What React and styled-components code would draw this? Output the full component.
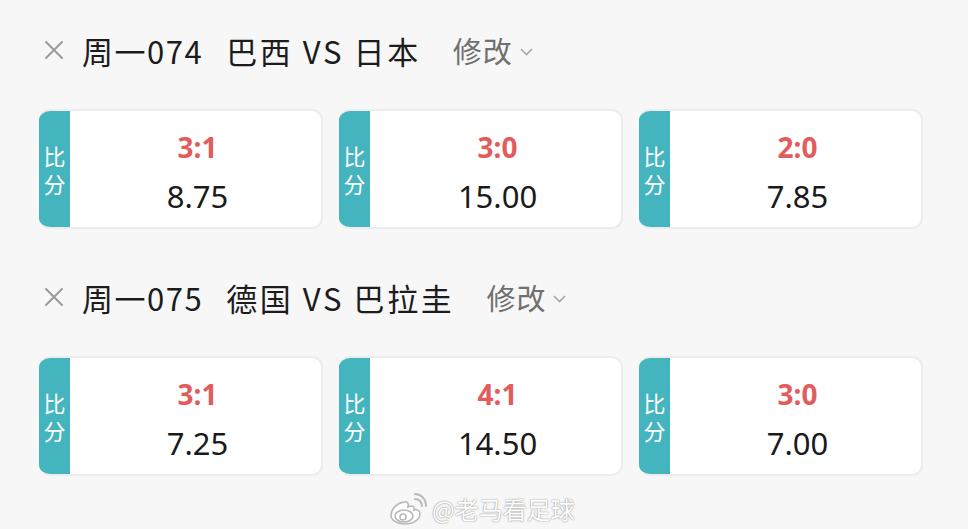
import React from "react";
import styled, { createGlobalStyle } from "styled-components";

const GlobalStyle = createGlobalStyle`
  html, body {
    margin: 0;
    padding: 0;
    background: #f7f7f7;
  }
  body {
    font-family: "Noto Sans", "Noto Sans CJK SC", sans-serif;
  }
`;

const matches = [
  {
    code: "周一074",
    teams: "巴西 VS 日本",
    picks: [
      { score: "3:1", odds: "8.75" },
      { score: "3:0", odds: "15.00" },
      { score: "2:0", odds: "7.85" },
    ],
  },
  {
    code: "周一075",
    teams: "德国 VS 巴拉圭",
    picks: [
      { score: "3:1", odds: "7.25" },
      { score: "4:1", odds: "14.50" },
      { score: "3:0", odds: "7.00" },
    ],
  },
];

const Page = styled.div`
  position: relative;
  width: 968px;
  height: 529px;
  padding: 22px 0 0 39px;
  box-sizing: border-box;
  overflow: hidden;
`;

const Section = styled.section`
  width: 884px;
  & + & {
    margin-top: 40px;
  }
`;

const Header = styled.div`
  display: flex;
  align-items: center;
  height: 56px;
  padding-left: 5px;
`;

const Close = styled.svg`
  width: 20px;
  height: 20px;
  margin-right: 18px;
  flex-shrink: 0;
`;

const Title = styled.div`
  font-family: "Noto Sans CJK SC", sans-serif;
  font-size: 31px;
  color: #1c1c1c;
  letter-spacing: ${(p) => p.spacing}px;
  white-space: pre;
  margin-right: ${(p) => p.gap || 0}px;
`;

const Edit = styled.div`
  display: flex;
  align-items: center;
  font-family: "Noto Sans CJK SC", sans-serif;
  font-size: 29px;
  letter-spacing: 1px;
  color: #707070;
  svg {
    margin-left: 7px;
    margin-top: 4px;
  }
`;

const Cards = styled.div`
  display: grid;
  grid-template-columns: repeat(3, 1fr);
  column-gap: 16px;
  margin-top: 31px;
`;

const Card = styled.div`
  display: flex;
  height: 120px;
  background: #fff;
  border: 2px solid #ececec;
  border-left: none;
  border-radius: 11px;
  box-sizing: border-box;
  overflow: hidden;
`;

const Tag = styled.div`
  width: 31px;
  flex-shrink: 0;
  background: #44b4be;
  color: #fff;
  font-family: "Noto Sans CJK SC", sans-serif;
  font-size: 22px;
  line-height: 28px;
  display: flex;
  align-items: center;
  justify-content: center;
  margin: -2px 0;
  span {
    width: 22px;
    text-align: center;
    word-break: break-all;
  }
`;

const Body = styled.div`
  flex: 1;
  display: flex;
  flex-direction: column;
  align-items: center;
  justify-content: center;
  padding: 6px 0 0 4px;
`;

const Score = styled.div`
  font-size: 28px;
  font-weight: 700;
  color: #e25c5c;
  line-height: 36px;
`;

const Odds = styled.div`
  font-size: 31px;
  color: #1a1a1a;
  line-height: 40px;
  margin-top: 11px;
`;

const Watermark = styled.div`
  position: absolute;
  left: 389px;
  top: 491px;
  display: flex;
  align-items: center;
  font-family: "Noto Sans CJK SC", sans-serif;
  font-size: 24px;
  color: #fff;
  text-shadow: 0 0 2px rgba(0, 0, 0, 0.35), 0 0 1px rgba(0, 0, 0, 0.3);
  svg {
    margin-right: 5px;
  }
`;

const WeiboLogo = () => (
  <svg width="38" height="32" viewBox="0 0 38 32" fill="none">
    <g stroke="#b9b9b9" strokeWidth="1.6" fill="#fff">
      <path d="M15 9 C8 10 2 16 2 22 C2 28 9 31 16 31 C25 31 31 26 31 21 C31 17 27 16 25 17 C26 13 23 12 19 14 C20 10 18 8 15 9 Z" />
      <ellipse cx="15" cy="23" rx="9" ry="6" />
      <circle cx="14" cy="24" r="3" />
    </g>
    <path d="M26 6 C30 6 33 9 33 13" stroke="#b9b9b9" strokeWidth="2" strokeLinecap="round" />
    <path d="M26 1 C32 1 37 6 37 13" stroke="#b9b9b9" strokeWidth="2" strokeLinecap="round" />
  </svg>
);

const App = () => {
  return (
    <>
      <GlobalStyle />
      <Page>
        {matches.map((m) => (
          <Section key={m.code}>
            <Header>
              <Close viewBox="0 0 20 20">
                <path
                  d="M2 2 L18 18 M18 2 L2 18"
                  stroke="#9a9a9a"
                  strokeWidth="2"
                  strokeLinecap="round"
                />
              </Close>
              <Title spacing={1.5} gap={23}>{m.code}</Title>
              <Title spacing={2.6} gap={32}>{m.teams}</Title>
              <Edit>
                修改
                <svg width="13" height="8" viewBox="0 0 13 8">
                  <path
                    d="M1 1 L6.5 6.5 L12 1"
                    stroke="#a6a6a6"
                    strokeWidth="1.6"
                    fill="none"
                  />
                </svg>
              </Edit>
            </Header>
            <Cards>
              {m.picks.map((p) => (
                <Card key={p.score + p.odds}>
                  <Tag>
                    <span>比分</span>
                  </Tag>
                  <Body>
                    <Score>{p.score}</Score>
                    <Odds>{p.odds}</Odds>
                  </Body>
                </Card>
              ))}
            </Cards>
          </Section>
        ))}
        <Watermark>
          <WeiboLogo />
          @老马看足球
        </Watermark>
      </Page>
    </>
  );
};

export default App;
